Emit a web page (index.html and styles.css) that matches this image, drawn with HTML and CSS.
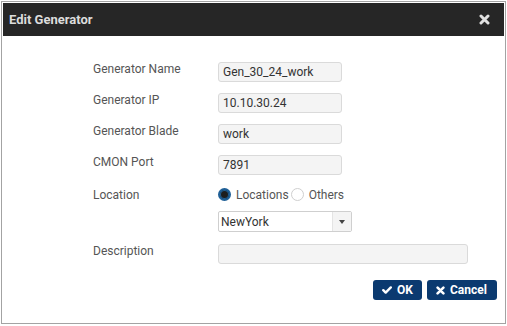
FILE: index.html
```html
<!DOCTYPE html>
<html lang="en">
<head>
    <meta charset="UTF-8">
    <meta name="viewport" content="width=device-width, initial-scale=1.0">
    <title>Edit Generator</title>
    <link rel="stylesheet" href="styles.css">
</head>
<body>
  <div class="dialog">
    <div class="dialog-header">
      <span class="dialog-title">Edit Generator</span>
      <svg class="close-btn" width="11" height="11" viewBox="0 0 11 11"><path d="M2 2 L9 9 M9 2 L2 9" fill="none" stroke="#e0e0e0" stroke-width="3" stroke-linecap="round"/></svg>
    </div>
    <div class="dialog-body">
      <div class="row">
        <label class="label">Generator Name</label>
        <input class="field" type="text" value="Gen_30_24_work">
      </div>
      <div class="row">
        <label class="label">Generator IP</label>
        <input class="field" type="text" value="10.10.30.24">
      </div>
      <div class="row">
        <label class="label">Generator Blade</label>
        <input class="field" type="text" value="work">
      </div>
      <div class="row">
        <label class="label">CMON Port</label>
        <input class="field" type="text" value="7891">
      </div>
      <div class="row row-location">
        <label class="label">Location</label>
        <div class="radios">
          <span class="radio checked"></span><span class="radio-text">Locations</span>
          <span class="radio"></span><span class="radio-text">Others</span>
        </div>
      </div>
      <div class="row row-select">
        <span class="label"></span>
        <div class="select">
          <span class="select-value">NewYork</span>
          <span class="select-arrow"></span>
        </div>
      </div>
      <div class="row">
        <label class="label">Description</label>
        <input class="field field-wide" type="text" value="">
      </div>
      <div class="actions">
        <button class="btn">
          <svg width="11" height="10" viewBox="0 0 11 10"><path d="M1.4 5.2 L4 7.8 L9.6 2.2" fill="none" stroke="#fff" stroke-width="2.6" stroke-linecap="round" stroke-linejoin="round"/></svg>
          OK
        </button>
        <button class="btn">
          <svg width="9" height="9" viewBox="0 0 9 9"><path d="M1.6 1.6 L7.4 7.4 M7.4 1.6 L1.6 7.4" fill="none" stroke="#fff" stroke-width="2.6" stroke-linecap="round"/></svg>
          Cancel
        </button>
      </div>
    </div>
  </div>
</body>
</html>
```

FILE: styles.css
```css
* {
  margin: 0;
  padding: 0;
  box-sizing: border-box;
}

body {
  font-family: 'Roboto', 'Liberation Sans', sans-serif;
  background: #fff;
  width: 507px;
  height: 326px;
  padding: 1px;
}

.dialog {
  width: 505px;
  height: 323px;
  border: 1px solid #a3a3a3;
  padding: 1px;
  background: #fff;
}

.dialog-header {
  height: 33px;
  background: #262626;
  display: flex;
  align-items: center;
  justify-content: space-between;
  padding: 0 14px 0 6px;
}

.dialog-title {
  color: #dcdcdc;
  font-size: 13px;
  font-weight: bold;
}

.dialog-body {
  padding: 20px 0 0 90px;
}

.row {
  display: flex;
  align-items: center;
  height: 31px;
}

.label {
  width: 125px;
  font-size: 12px;
  color: #555;
  padding-bottom: 6px;
}

.field {
  width: 124px;
  height: 20px;
  border: 1px solid #dadada;
  border-radius: 3px;
  background: #f4f4f4;
  padding: 0 4px;
  font-family: inherit;
  font-size: 12px;
  color: #333;
  outline: none;
}

.field-wide {
  width: 250px;
}

.row-location {
  height: 30px;
}

.row-location .label {
  padding-bottom: 0;
}

.radios {
  display: flex;
  align-items: center;
  font-size: 12px;
  color: #555;
  padding-bottom: 1px;
}

.radio {
  width: 13px;
  height: 13px;
  border-radius: 50%;
  border: 1px solid #cfcfcf;
  background: #fff;
  margin-right: 5px;
}

.radio.checked {
  border: 2px solid #1f5f96;
  background: #1d1d1d;
  box-shadow: inset 0 0 0 1px #1f5f96;
}

.radio-text {
  margin-right: 2px;
}

.row-select {
  height: 28px;
  align-items: flex-start;
}

.row-select .label {
  padding: 0;
}

.select {
  width: 134px;
  height: 21px;
  margin-top: 1px;
  border: 1px solid #cfcfcf;
  border-radius: 2px;
  display: flex;
  align-items: center;
  justify-content: space-between;
  font-size: 12px;
  color: #333;
}

.select-value {
  padding-left: 2px;
}

.select-arrow {
  width: 19px;
  height: 19px;
  background: #f4f4f4;
  border-left: 1px solid #e4e4e4;
  display: flex;
  align-items: center;
  justify-content: center;
}

.select-arrow::after {
  content: "";
  border-left: 3.5px solid transparent;
  border-right: 3.5px solid transparent;
  border-top: 4px solid #444;
}

.actions {
  display: flex;
  justify-content: flex-end;
  gap: 5px;
  width: 404px;
  margin-top: 11px;
}

.btn {
  height: 20px;
  padding: 0 9px;
  background: #0b3a70;
  color: #fff;
  border: none;
  border-radius: 3px;
  font-family: inherit;
  font-size: 12px;
  font-weight: bold;
  display: flex;
  align-items: center;
  gap: 5px;
}

.btn:first-child {
  width: 49px;
}

.btn:last-child {
  width: 70px;
}
```
